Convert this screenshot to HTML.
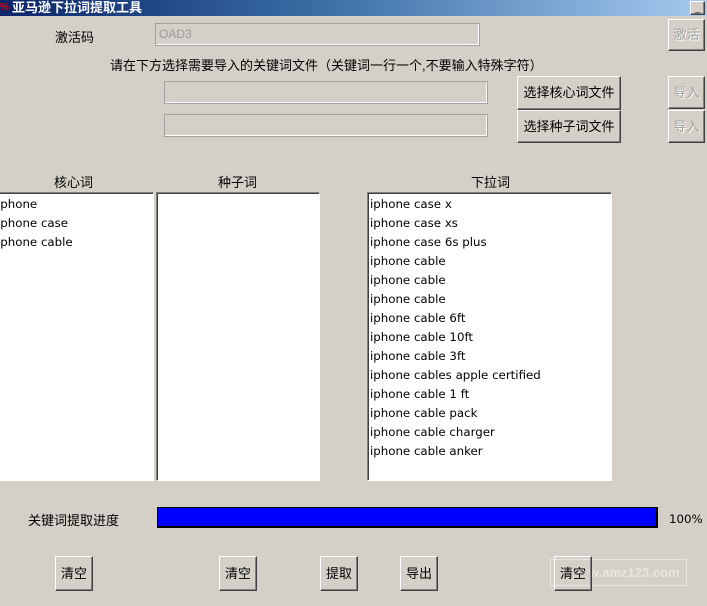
<!DOCTYPE html>
<html><head><meta charset="utf-8"><style>
*{margin:0;padding:0;box-sizing:border-box}
body{width:707px;height:606px;overflow:hidden;background:#d4d0c8;font-family:"Liberation Sans","Noto Sans CJK SC",sans-serif;font-size:13px;color:#000;position:relative}
.a{position:absolute}
.title{left:0;top:0;width:707px;height:16px;background:linear-gradient(90deg,#0a246a,#3a6ea5 45%,#a6caf0);color:#fff;font-weight:bold;font-size:13px;line-height:16px;padding-left:12px}
.inp{border:1px solid #a0a0a0;background:#d4d0c8;box-shadow:inset -1px -1px #fff}
.btn{background:#d4d0c8;border:1px solid;border-color:#fff #404040 #404040 #fff;box-shadow:inset -1px -1px #808080;text-align:center;font-size:13px}
.dis{color:#a0a0a0;text-shadow:1px 1px #fff}
.list{background:#fff;border:1px solid;border-color:#808080 #fff #fff #808080;box-shadow:inset 1px 1px #404040;font-family:"DejaVu Sans",sans-serif;font-size:11.8px;line-height:19px;padding-top:2px;overflow:hidden;white-space:nowrap}
</style></head><body>
<div class="a title">亚马逊下拉词提取工具</div>
<div class="a" style="left:0;top:2px;width:10px;height:12px;color:#e00;font-size:10px;font-weight:bold">%</div>
<div class="a btn" style="left:690px;top:1px;width:15px;height:14px;font-size:9px;line-height:12px">_</div>
<div class="a" style="left:55px;top:27px">激活码</div>
<div class="a inp" style="left:155px;top:23px;width:325px;height:23px;color:#999;font-size:12px;line-height:21px;padding-left:3px">OAD3</div>
<div class="a btn dis" style="left:668px;top:19px;width:37px;height:32px;line-height:30px">激活</div>
<div class="a" style="left:110px;top:55px;font-size:13px">请在下方选择需要导入的关键词文件（关键词一行一个,不要输入特殊字符）</div>
<div class="a inp" style="left:164px;top:81px;width:324px;height:23px"></div>
<div class="a btn" style="left:517px;top:76px;width:104px;height:34px;line-height:32px">选择核心词文件</div>
<div class="a btn dis" style="left:668px;top:76px;width:37px;height:33px;line-height:31px">导入</div>
<div class="a inp" style="left:164px;top:114px;width:324px;height:23px"></div>
<div class="a btn" style="left:517px;top:110px;width:104px;height:33px;line-height:31px">选择种子词文件</div>
<div class="a btn dis" style="left:668px;top:110px;width:37px;height:33px;line-height:31px">导入</div>
<div class="a" style="left:54px;top:172px">核心词</div>
<div class="a" style="left:218px;top:172px">种子词</div>
<div class="a" style="left:471px;top:172px">下拉词</div>
<div class="a list" style="left:-4px;top:192px;width:158px;height:289px;padding-left:0">iphone<br>iphone case<br>iphone cable</div>
<div class="a list" style="left:156px;top:192px;width:164px;height:289px"></div>
<div class="a list" style="left:367px;top:192px;width:245px;height:289px;padding-left:2px">iphone case x<br>iphone case xs<br>iphone case 6s plus<br>iphone cable<br>iphone cable<br>iphone cable<br>iphone cable 6ft<br>iphone cable 10ft<br>iphone cable 3ft<br>iphone cables apple certified<br>iphone cable 1 ft<br>iphone cable pack<br>iphone cable charger<br>iphone cable anker</div>
<div class="a" style="left:28px;top:510px">关键词提取进度</div>
<div class="a" style="left:157px;top:507px;width:501px;height:21px;background:#0000ff;border:1px solid #000;border-bottom-width:2px;border-right-width:2px"></div>
<div class="a" style="left:669px;top:512px;font-family:'DejaVu Sans',sans-serif;font-size:11.8px">100%</div>
<div class="a btn" style="left:55px;top:556px;width:38px;height:35px;line-height:33px">清空</div>
<div class="a btn" style="left:219px;top:556px;width:38px;height:35px;line-height:33px">清空</div>
<div class="a btn" style="left:320px;top:556px;width:38px;height:35px;line-height:33px">提取</div>
<div class="a btn" style="left:400px;top:556px;width:38px;height:35px;line-height:33px">导出</div>
<div class="a" style="left:550px;top:559px;width:137px;height:27px;border:1px solid #e8e6e0;color:#e8e6e0;font-weight:bold;font-size:13px;line-height:25px;padding-left:38px">w.amz123.com</div>
<div class="a btn" style="left:554px;top:556px;width:38px;height:35px;line-height:33px;background:transparent">清空</div>
</body></html>
